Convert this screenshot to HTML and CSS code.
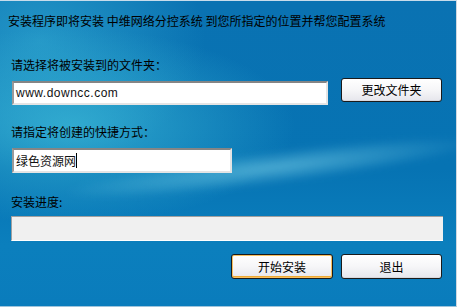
FILE: index.html
```html
<!DOCTYPE html>
<html lang="zh">
<head>
<meta charset="utf-8">
<title>安装</title>
<link rel="stylesheet" href="styles.css">
</head>
<body>
<div class="window">
  <p class="intro">安装程序即将安装 中维网络分控系统 到您所指定的位置并帮您配置系统</p>
  <p class="label label-folder">请选择将被安装到的文件夹：</p>
  <div class="row">
    <div class="field field-path">www.downcc.com</div>
    <button class="btn">更改文件夹</button>
  </div>
  <p class="label label-shortcut">请指定将创建的快捷方式：</p>
  <div class="field field-short">绿色资源网<span class="caret"></span></div>
  <p class="label label-progress">安装进度:</p>
  <div class="progress"></div>
  <div class="actions">
    <button class="btn btn-default">开始安装</button>
    <button class="btn">退出</button>
  </div>
</div>
</body>
</html>
```
FILE: styles.css
```css
html, body {
  margin: 0;
  padding: 0;
}
body {
  width: 457px;
  height: 307px;
  overflow: hidden;
  font-family: "Noto Sans CJK SC", "Liberation Sans", sans-serif;
  font-size: 12px;
  color: #000;
}
.window {
  position: relative;
  overflow: hidden;
  box-sizing: border-box;
  width: 457px;
  height: 307px;
  border-top: 1px solid #c8dceb;
  border-right: 1px solid #d0d8e0;
  border-bottom: 1px solid #9ec4dc;
  background:
    radial-gradient(ellipse 300px 130px at 70px 125px, rgba(60, 185, 215, 0.75), rgba(60, 185, 215, 0) 75%),
    radial-gradient(ellipse 220px 170px at 40px 40px, rgba(50, 170, 210, 0.65), rgba(50, 170, 210, 0) 75%),
    linear-gradient(180deg, #0a72b2 0%, #0673b3 55%, #0b7fbd 80%, #0a7cbc 100%);
  padding: 12px 0 0 0;
  line-height: 16px;
}
.window::before {
  content: "";
  position: absolute;
  left: 60px;
  top: 150px;
  width: 420px;
  height: 34px;
  border-radius: 50%;
  background: radial-gradient(ellipse at center, rgba(130, 215, 235, 0.55), rgba(130, 215, 235, 0) 70%);
  transform: rotate(-7deg);
  filter: blur(3px);
  pointer-events: none;
}
.window > * {
  position: relative;
}
.intro {
  margin: 0 0 0 8px;
}
.label {
  margin: 0 0 0 11px;
}
.label-folder {
  margin-top: 28px;
}
.row {
  display: flex;
  align-items: flex-start;
  margin: 5px 0 0 12px;
}
.field {
  box-sizing: border-box;
  height: 24px;
  background: #fff;
  border-style: solid;
  border-width: 2px;
  border-color: #858585 #e4e4e4 #e4e4e4 #9a9a9a;
  padding: 2px 0 0 2px;
  line-height: 16px;
  font-family: "Liberation Sans", "Noto Sans CJK SC", sans-serif;
  font-size: 12px;
  color: #111;
}
.field-path {
  width: 316px;
  margin-top: 3px;
  letter-spacing: 0.5px;
}
.field-short {
  width: 220px;
  height: 25px;
  margin: 8px 0 0 12px;
  font-family: "Noto Sans CJK SC", sans-serif;
  display: flex;
  align-items: center;
  padding-top: 0;
}
.caret {
  display: inline-block;
  width: 1px;
  height: 15px;
  background: #000;
}
.btn {
  box-sizing: border-box;
  width: 101px;
  height: 24px;
  padding: 0;
  border: 1px solid #1a1a1a;
  border-radius: 3px;
  background: linear-gradient(180deg, #ffffff 0%, #f6f6f8 50%, #e6e6ec 100%);
  box-shadow: inset 0 -1px 0 #d8d8de;
  font-family: "Noto Sans CJK SC", sans-serif;
  font-size: 12px;
  line-height: 16px;
  color: #000;
}
.row .btn {
  margin-left: 13px;
}
.btn-default {
  box-shadow: inset 0 0 0 1px #f5c060, inset 0 -2px 0 #f0a830;
  width: 102px;
}
.label-shortcut {
  margin-top: 19px;
}
.label-progress {
  margin-top: 21px;
}
.progress {
  box-sizing: border-box;
  width: 432px;
  height: 25px;
  margin: 6px 0 0 11px;
  background: #f0f0f0;
  border-top: 1px solid #a0a0a0;
  border-left: 1px solid #a0a0a0;
  border-bottom: 1px solid #ffffff;
}
.actions {
  display: flex;
  gap: 8px;
  margin: 13px 0 0 231px;
}
.actions .btn {
  height: 25px;
}
```
